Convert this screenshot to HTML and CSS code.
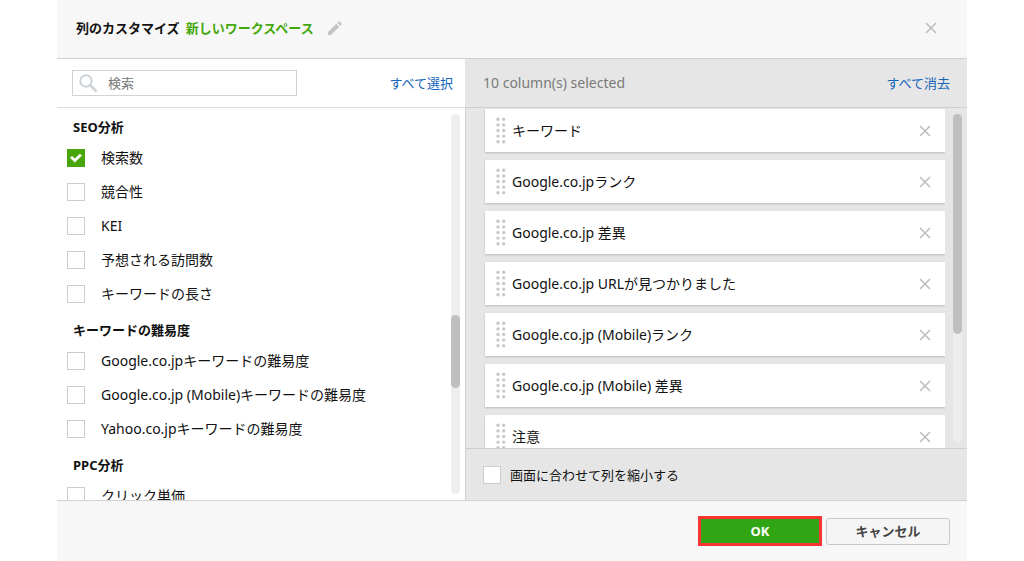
FILE: index.html
```html
<!DOCTYPE html>
<html lang="ja">
<head>
<meta charset="utf-8">
<meta name="viewport" content="width=device-width, initial-scale=1">
<title>列のカスタマイズ</title>
<link rel="stylesheet" href="styles.css">
</head>
<body>
<svg class="sprites" aria-hidden="true">
  <symbol id="close" viewBox="0 0 12 12"><path d="M1 1 11 11M11 1 1 11" fill="none" stroke="currentColor" stroke-width="1.5"/></symbol>
  <symbol id="grip" viewBox="0 0 10 27">
    <g fill="currentColor">
      <circle cx="2" cy="2.2" r="1.7"/><circle cx="7.7" cy="2.2" r="1.7"/>
      <circle cx="2" cy="7.9" r="1.7"/><circle cx="7.7" cy="7.9" r="1.7"/>
      <circle cx="2" cy="13.5" r="1.7"/><circle cx="7.7" cy="13.5" r="1.7"/>
      <circle cx="2" cy="19.1" r="1.7"/><circle cx="7.7" cy="19.1" r="1.7"/>
      <circle cx="2" cy="24.8" r="1.7"/><circle cx="7.7" cy="24.8" r="1.7"/>
    </g>
  </symbol>
</svg>
<main class="dialog">
  <header class="dialog-header">
    <h1 class="title">列のカスタマイズ</h1>
    <span class="workspace">新しいワークスペース</span>
    <button class="icon-button" type="button" aria-label="名前を編集">
      <svg width="14" height="14" viewBox="0 0 14 14"><path d="M0 14v-3L8.300 2.700l3 3L3 14zM9.200 1.800 10.600.4q.5-.5 1 0l2 2q.5.5 0 1l-1.400 1.400z" fill="#c4c4c4"/></svg>
    </button>
    <button class="icon-button close-dialog" type="button" aria-label="閉じる"><svg width="12" height="12"><use href="#close"/></svg></button>
  </header>

  <div class="panels">
    <section class="panel available">
      <div class="toolbar">
        <label class="search">
          <svg width="19" height="19" viewBox="0 0 19 19"><circle cx="7" cy="7" r="5.700" fill="none" stroke="#ccd3d9" stroke-width="2"/><path d="m11.500 11.500 6 6" stroke="#ccd3d9" stroke-width="2.600"/></svg>
          <input type="text" placeholder="検索" aria-label="検索">
        </label>
        <a class="link" href="#">すべて選択</a>
      </div>
      <div class="scroll-area">
        <div class="options">
          <h2 class="group-title">SEO分析</h2>
          <label class="option"><input class="check" type="checkbox" checked>検索数</label>
          <label class="option"><input class="check" type="checkbox">競合性</label>
          <label class="option"><input class="check" type="checkbox">KEI</label>
          <label class="option"><input class="check" type="checkbox">予想される訪問数</label>
          <label class="option"><input class="check" type="checkbox">キーワードの長さ</label>
          <h2 class="group-title">キーワードの難易度</h2>
          <label class="option"><input class="check" type="checkbox">Google.co.jpキーワードの難易度</label>
          <label class="option"><input class="check" type="checkbox">Google.co.jp (Mobile)キーワードの難易度</label>
          <label class="option"><input class="check" type="checkbox">Yahoo.co.jpキーワードの難易度</label>
          <h2 class="group-title">PPC分析</h2>
          <label class="option"><input class="check" type="checkbox">クリック単価</label>
        </div>
        <div class="track"><div class="thumb thumb-available"></div></div>
      </div>
    </section>

    <section class="panel selected">
      <div class="toolbar">
        <span class="count">10 column(s) selected</span>
        <a class="link" href="#">すべて消去</a>
      </div>
      <div class="scroll-area">
        <ul class="cards">
          <li class="card"><svg class="grip" width="10" height="27"><use href="#grip"/></svg><span class="card-name">キーワード</span><button class="icon-button" type="button" aria-label="キーワードを削除"><svg width="12" height="12"><use href="#close"/></svg></button></li>
          <li class="card"><svg class="grip" width="10" height="27"><use href="#grip"/></svg><span class="card-name">Google.co.jpランク</span><button class="icon-button" type="button" aria-label="Google.co.jpランクを削除"><svg width="12" height="12"><use href="#close"/></svg></button></li>
          <li class="card"><svg class="grip" width="10" height="27"><use href="#grip"/></svg><span class="card-name">Google.co.jp 差異</span><button class="icon-button" type="button" aria-label="Google.co.jp 差異を削除"><svg width="12" height="12"><use href="#close"/></svg></button></li>
          <li class="card"><svg class="grip" width="10" height="27"><use href="#grip"/></svg><span class="card-name">Google.co.jp URLが見つかりました</span><button class="icon-button" type="button" aria-label="Google.co.jp URLを削除"><svg width="12" height="12"><use href="#close"/></svg></button></li>
          <li class="card"><svg class="grip" width="10" height="27"><use href="#grip"/></svg><span class="card-name">Google.co.jp (Mobile)ランク</span><button class="icon-button" type="button" aria-label="Google.co.jp (Mobile)ランクを削除"><svg width="12" height="12"><use href="#close"/></svg></button></li>
          <li class="card"><svg class="grip" width="10" height="27"><use href="#grip"/></svg><span class="card-name">Google.co.jp (Mobile) 差異</span><button class="icon-button" type="button" aria-label="Google.co.jp (Mobile) 差異を削除"><svg width="12" height="12"><use href="#close"/></svg></button></li>
          <li class="card"><svg class="grip" width="10" height="27"><use href="#grip"/></svg><span class="card-name">注意</span><button class="icon-button" type="button" aria-label="注意を削除"><svg width="12" height="12"><use href="#close"/></svg></button></li>
        </ul>
        <div class="track"><div class="thumb thumb-selected"></div></div>
      </div>
      <div class="fit">
        <label class="fit-label"><input class="check" type="checkbox">画面に合わせて列を縮小する</label>
      </div>
    </section>
  </div>

  <footer class="dialog-footer">
    <button class="button button-ok" type="button">OK</button>
    <button class="button button-cancel" type="button">キャンセル</button>
  </footer>
</main>
</body>
</html>
```
FILE: styles.css
```css
* {
  box-sizing: border-box;
}

body {
  margin: 0;
  background: #fff;
  color: #111;
  font: 13px/20px "Noto Sans", "Noto Sans CJK JP", sans-serif;
}

button,
input {
  font: inherit;
}

.sprites {
  display: none;
}

.dialog {
  display: flex;
  flex-direction: column;
  height: 100vh;
  margin: 0 57px;
  background: #f7f7f7;
}

.dialog-header {
  display: flex;
  align-items: center;
  gap: 6px;
  height: 59px;
  padding: 0 25px 2px 19px;
  border-bottom: 1px solid #d2d2d2;
}

.title {
  margin: 0;
  font-size: 13px;
  font-weight: 700;
}

.workspace {
  margin-right: 4px;
  color: #43a80b;
  font-weight: 700;
}

.icon-button {
  display: flex;
  padding: 4px;
  border: 0;
  background: none;
  color: #bcbcbc;
  cursor: pointer;
}

.close-dialog {
  margin-left: auto;
}

.close-dialog,
.card .icon-button {
  padding: 5px;
}

.panels {
  display: grid;
  grid-template-columns: 204fr 251fr;
  flex: 1;
  min-height: 0;
}

.panel {
  display: flex;
  flex-direction: column;
  min-width: 0;
  min-height: 0;
}

.available {
  background: #fff;
}

.selected {
  background: #e6e6e6;
}

.toolbar {
  display: flex;
  flex-shrink: 0;
  align-items: center;
  justify-content: space-between;
  height: 49px;
  padding: 0 12px 0 15px;
  border-bottom: 1px solid #dedede;
}

.selected .toolbar {
  padding: 0 17px 0 18px;
  border-color: #cfcfcf;
}

.search {
  display: flex;
  align-items: center;
  gap: 10px;
  width: 225px;
  height: 26px;
  padding-left: 6px;
  border: 1px solid #d2d2d2;
}

.search input {
  flex: 1;
  min-width: 0;
  padding: 0;
  border: 0;
  outline: 0;
  background: none;
}

.search input::placeholder {
  color: #777;
  opacity: 1;
}

.link {
  color: #1565bb;
  text-decoration: none;
}

.count {
  color: #7a7a7a;
  font-size: 14px;
}

.scroll-area {
  display: flex;
  flex: 1;
  justify-content: space-between;
  min-height: 0;
  padding-right: 5px;
}

.selected .scroll-area {
  gap: 8px;
  border-left: 1px solid #cfcfcf;
}

.options {
  flex: 1;
  overflow: hidden;
  padding-left: 10px;
}

.group-title {
  height: 33px;
  margin: 0;
  padding: 9px 0 0 6px;
  font-size: 13px;
  font-weight: 700;
}

.option {
  display: flex;
  align-items: center;
  gap: 16px;
  height: 34px;
  font-size: 14px;
}

.check {
  display: grid;
  place-items: center;
  flex-shrink: 0;
  width: 18px;
  height: 18px;
  margin: 0;
  border: 1px solid #ccc;
  background: #fff;
  appearance: none;
}

.check:checked {
  border-color: #49a608;
  background: #49a608;
}

.check:checked::before {
  width: 12px;
  height: 10px;
  background: #fff;
  clip-path: polygon(0 48%, 17% 30%, 40% 56%, 82% 8%, 100% 26%, 40% 96%);
  content: "";
}

.track {
  width: 9px;
  margin: 6px 0;
  border-radius: 5px;
  background: #eee;
}

.thumb {
  border-radius: 5px;
  background: #bfbfbf;
}

.thumb-available {
  position: relative;
  top: 53%;
  height: 19%;
}

.thumb-selected {
  height: 67%;
}

.cards {
  display: flex;
  flex: 1;
  flex-direction: column;
  gap: 8px;
  margin: 0;
  padding: 1px 0 0 19px;
  overflow: hidden;
  list-style: none;
}

.card {
  display: flex;
  flex-shrink: 0;
  align-items: center;
  height: 43px;
  padding: 0 9px 0 11px;
  background: #fff;
  box-shadow: 0 1px 2px #bbb;
}

.grip {
  color: #c8c8c8;
}

.card-name {
  flex: 1;
  padding-left: 6px;
  font-size: 14px;
}

.fit {
  display: flex;
  flex-shrink: 0;
  align-items: center;
  height: 52px;
  padding-left: 17px;
  border-top: 1px solid #cdcdcd;
  border-left: 1px solid #cfcfcf;
}

.fit-label {
  display: flex;
  align-items: center;
  gap: 9px;
}

.dialog-footer {
  display: flex;
  align-items: center;
  justify-content: flex-end;
  gap: 4px;
  height: 61px;
  padding-right: 17px;
  border-top: 1px solid #d2d2d2;
}

.button {
  width: 124px;
  padding: 0;
  font-weight: 700;
  cursor: pointer;
}

.button-ok {
  height: 30px;
  border: 3px solid #fb3434;
  background: #32a514;
  color: #fff;
}

.button-cancel {
  height: 27px;
  border: 1px solid #c8c8c8;
  border-radius: 3px;
  background: #f5f5f5;
  color: #444;
}
```
